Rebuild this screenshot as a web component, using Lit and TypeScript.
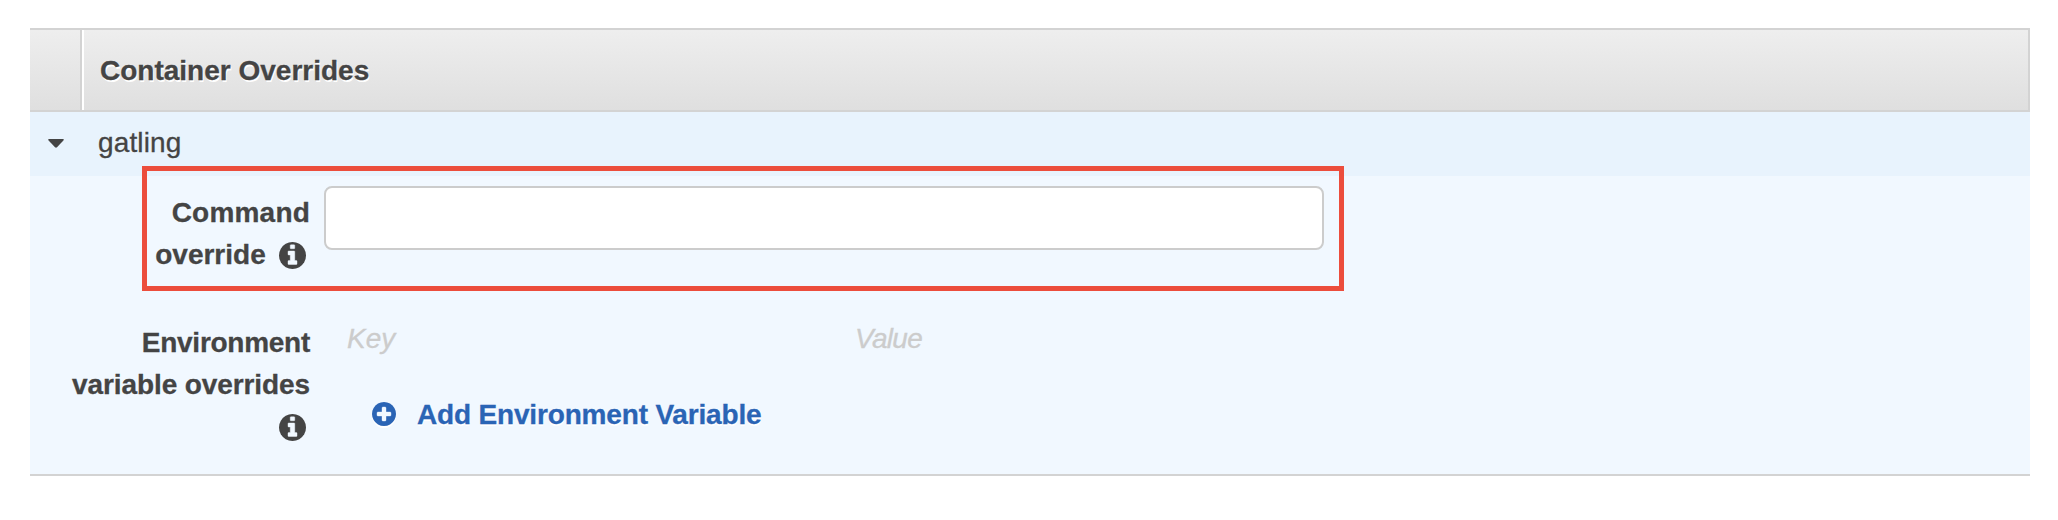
import { LitElement, html, css, svg } from "lit";
import { customElement } from "lit/decorators.js";

const disc =
  "M1536 896q0 209-103 385.5t-279.5 279.5-385.5 103-385.5-103-279.5-279.5-103-385.5 103-385.5 279.5-279.5 385.5-103 385.5 103 279.5 279.5 103 385.5z";
const infoShape =
  "M1024 1376v-160q0-14-9-23t-23-9h-96v-512q0-14-9-23t-23-9h-320q-14 0-23 9t-9 23v160q0 14 9 23t23 9h96v320h-96q-14 0-23 9t-9 23v160q0 14 9 23t23 9h448q14 0 23-9t9-23zM896 480v-160q0-14-9-23t-23-9h-192q-14 0-23 9t-9 23v160q0 14 9 23t23 9h192q14 0 23-9t9-23z";
const plusShape =
  "M1216 960v-128q0-26-19-45t-45-19h-256v-256q0-26-19-45t-45-19h-128q-26 0-45 19t-19 45v256h-256q-26 0-45 19t-19 45v128q0 26 19 45t45 19h256v256q0 26 19 45t45 19h128q26 0 45-19t19-45v-256h256q26 0 45-19t19-45z";

const icon = (cls: string, shape: string) => html`<svg class=${cls} viewBox="0 128 1536 1536" aria-hidden="true">
  ${svg`<path fill="currentColor" d=${disc}></path><path class="glyph" d=${shape}></path>`}
</svg>`;

@customElement("app-root")
export class AppRoot extends LitElement {
  static styles = css`
    :host {
      display: block;
      box-sizing: border-box;
      height: 520px;
      padding: 28px 28px 0 30px;
      background: #fff;
      color: #444;
      font: 28px/42px "Liberation Sans", Arial, sans-serif;
      -webkit-text-stroke: 0.3px currentColor;
    }
    * { box-sizing: border-box; }
    .panel {
      position: relative;
      height: 448px;
      background: #f1f8ff;
      border-bottom: 2px solid #d3d3d3;
    }
    .head {
      display: grid;
      grid-template-columns: 52px 1fr;
      height: 84px;
      border: 2px solid #d3d3d3;
      border-left: 0;
      background: linear-gradient(#eeeeee, #dfdfdf);
      font-weight: bold;
      text-shadow: 1px 2px 0 #fff;
    }
    .stub { border-right: 2px solid #d3d3d3; }
    .title {
      border-left: 2px solid #fff;
      padding: 20px 0 0 16px;
    }
    .row {
      display: flex;
      height: 64px;
      padding: 10px 0 0 18px;
      background: #e8f3fd;
    }
    .name { letter-spacing: 0.15px; }
    .caret {
      width: 16px;
      height: 9px;
      margin: 17px 34px 0 0;
      fill: #444;
    }
    .field {
      display: grid;
      grid-template-columns: 280px 1000px;
      column-gap: 14px;
    }
    .command { padding-top: 10px; height: 146px; }
    .label {
      font-weight: bold;
      text-align: right;
      padding-top: 6px;
    }
    .command .first { letter-spacing: 0.2px; }
    .env .label { padding-top: 0; letter-spacing: -0.1px; }
    .env .first { letter-spacing: -0.27px; }
    .glyph { fill: #f1f8ff; stroke: #f1f8ff; stroke-width: 24; }
    .info {
      width: 27px;
      height: 27px;
      margin: 0 4.5px 0 5px;
      vertical-align: -5px;
    }
    .input {
      width: 1000px;
      height: 64px;
      padding: 0 14px;
      border: 2px solid #ccc;
      border-radius: 8px;
      background: #fff;
      font: inherit;
      outline: 0;
    }
    .pairs {
      display: grid;
      grid-template-columns: 508px 1fr;
      padding-left: 23px;
      margin-top: -4px;
      color: #ccc;
      font-style: italic;
    }
    .value { letter-spacing: -0.7px; }
    .add {
      display: flex;
      align-items: center;
      margin: 34px 0 0 48px;
      padding: 0;
      border: 0;
      background: none;
      color: #2a64b5;
      font: inherit;
      font-weight: bold;
      letter-spacing: -0.17px;
      text-shadow: 0 2px 0 #fff;
    }
    .plus {
      width: 24px;
      height: 24px;
      margin: -2px 21px 0 0;
      filter: drop-shadow(0 2px 0 #fff);
    }
    .marker {
      position: absolute;
      left: 112px;
      top: 138px;
      width: 1202px;
      height: 125px;
      border: 5px solid #ec4d3c;
      pointer-events: none;
    }
  `;

  render() {
    return html`
      <section class="panel">
        <header class="head">
          <div class="stub"></div>
          <div class="title">Container Overrides</div>
        </header>
        <div class="row">
          <svg class="caret" viewBox="0 0 16 9"><path d="M1 0H15Q16.4 .3 15.4 1.6L9 8.3Q8 9.2 7 8.3L.6 1.6Q-.4 .3 1 0Z" /></svg>
          <span class="name">gatling</span>
        </div>
        <div class="field command">
          <div class="label"><span class="first">Command</span><br />override ${icon("info", infoShape)}</div>
          <input class="input" aria-label="Command override" />
        </div>
        <div class="field env">
          <div class="label"><span class="first">Environment</span><br />variable overrides<br />${icon("info", infoShape)}</div>
          <div>
            <div class="pairs"><span>Key</span><span class="value">Value</span></div>
            <button class="add">${icon("plus", plusShape)}<span>Add Environment Variable</span></button>
          </div>
        </div>
        <div class="marker"></div>
      </section>
    `;
  }
}
